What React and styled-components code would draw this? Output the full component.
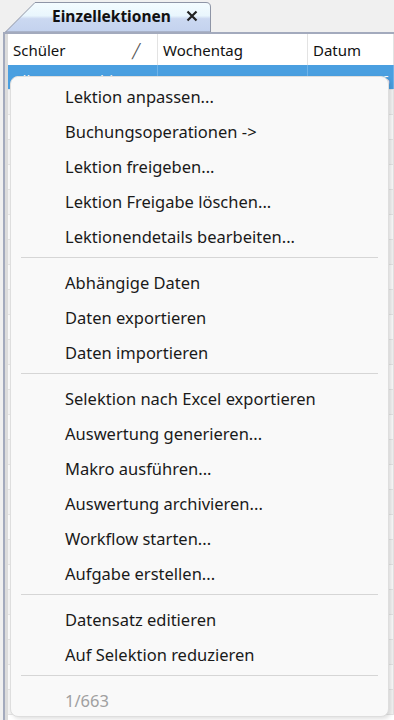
import React from 'react';
import styled, { createGlobalStyle } from 'styled-components';

const GlobalStyle = createGlobalStyle`
  html, body {
    margin: 0;
    padding: 0;
    background: #f0f0f0;
    font-family: "Noto Sans", "Open Sans", sans-serif;
    overflow: hidden;
  }
`;

const Page = styled.div`
  position: relative;
  width: 394px;
  height: 720px;
  overflow: hidden;
  background: #f0f0f0;
`;

const TabStrip = styled.div`
  height: 32px;
  display: flex;
  align-items: flex-end;
  padding-left: 5px;
`;

const Tab = styled.div`
  position: relative;
  width: 206px;
  height: 31px;
  display: flex;
  align-items: center;
  padding-left: 47px;
  padding-bottom: 1px;
  box-sizing: border-box;
`;

const TabShape = styled.svg`
  position: absolute;
  left: 0;
  top: 0;
  width: 206px;
  height: 31px;
`;

const TabTitle = styled.span`
  position: relative;
  font-weight: 700;
  font-size: 15.5px;
  color: #111;
`;

const CloseMark = styled.svg`
  position: relative;
  margin-left: 15px;
  width: 12px;
  height: 12px;
`;

const Panel = styled.div`
  margin-left: 3px;
  border-left: 2px solid #a3aabd;
  border-top: 2px solid #a3aabd;
  height: 700px;
  background: #fff;
`;

const Inner = styled.div`
  border-left: 3px solid #dcdcdc;
  height: 100%;
`;

const HeaderRow = styled.div`
  display: grid;
  grid-template-columns: 150px 150px 1fr;
  height: 31px;
  background: #fff;
`;

const HeaderCell = styled.div`
  position: relative;
  display: flex;
  align-items: center;
  padding-left: 5px;
  font-size: 15px;
  color: #111;
  border-right: 1px solid #e3e3e3;
`;

const SortMark = styled.span`
  position: absolute;
  left: 124px;
  top: 7px;
  font-size: 14px;
  color: #555;
`;

const Row = styled.div`
  display: grid;
  grid-template-columns: 150px 150px 1fr;
  height: 25px;
  background: ${({ $selected, $alt }) => ($selected ? '#4a9fe0' : $alt ? '#f3f3f3' : '#fafafa')};
  border-bottom: 1px solid #e4e4e4;
  box-sizing: border-box;
`;

const Cell = styled.div`
  display: flex;
  align-items: center;
  padding-left: 5px;
  padding-top: 6px;
  font-size: 15px;
  color: ${({ $selected }) => ($selected ? '#fff' : '#111')};
  border-right: 1px solid ${({ $selected }) => ($selected ? '#6fb3e8' : '#e3e3e3')};
  white-space: nowrap;
  overflow: hidden;
`;

const Menu = styled.div`
  position: absolute;
  left: 10px;
  top: 76px;
  width: 379px;
  height: 641px;
  box-sizing: border-box;
  background: #f9f9f9;
  border: 1px solid #dedede;
  border-radius: 8px;
  box-shadow: 2px 2px 4px rgba(0, 0, 0, 0.12);
  padding-top: 2px;
`;

const Item = styled.div`
  height: 35px;
  display: flex;
  align-items: center;
  padding-left: 54px;
  font-size: 16.5px;
  color: ${({ $disabled }) => ($disabled ? '#a0a0a0' : '#1a1a1a')};
`;

const Separator = styled.div`
  height: 1px;
  margin: 3px 10px 7px 10px;
  background: #d6d6d6;
`;

const groups = [
  [
    'Lektion anpassen...',
    'Buchungsoperationen ->',
    'Lektion freigeben...',
    'Lektion Freigabe löschen...',
    'Lektionendetails bearbeiten...',
  ],
  ['Abhängige Daten', 'Daten exportieren', 'Daten importieren'],
  [
    'Selektion nach Excel exportieren',
    'Auswertung generieren...',
    'Makro ausführen...',
    'Auswertung archivieren...',
    'Workflow starten...',
    'Aufgabe erstellen...',
  ],
  ['Datensatz editieren', 'Auf Selektion reduzieren'],
];

const rows = Array.from({ length: 26 });

function App() {
  return (
    <Page>
      <GlobalStyle />
      <TabStrip>
        <Tab>
          <TabShape viewBox="0 0 206 31">
            <defs>
              <linearGradient id="tabFill" x1="0" y1="0" x2="0" y2="1">
                <stop offset="0" stopColor="#f4fcff" />
                <stop offset="0.45" stopColor="#e9f6fd" />
                <stop offset="0.55" stopColor="#cbd8f1" />
                <stop offset="1" stopColor="#c3d2ee" />
              </linearGradient>
            </defs>
            <path
              d="M0.5 31 L30 1.5 L201 1.5 Q205.5 1.5 205.5 6 L205.5 31 Z"
              fill="url(#tabFill)"
              stroke="#8e95a6"
              strokeWidth="1"
            />
          </TabShape>
          <TabTitle>Einzellektionen</TabTitle>
          <CloseMark viewBox="0 0 12 12">
            <path d="M1.5 1.5 L10.5 10.5 M10.5 1.5 L1.5 10.5" stroke="#222" strokeWidth="2.2" />
          </CloseMark>
        </Tab>
      </TabStrip>
      <Panel>
        <Inner>
          <HeaderRow>
            <HeaderCell>
              Schüler
              <SortMark>╱</SortMark>
            </HeaderCell>
            <HeaderCell>Wochentag</HeaderCell>
            <HeaderCell>Datum</HeaderCell>
          </HeaderRow>
          {rows.map((_, i) => (
            <Row key={i} $selected={i === 0} $alt={i % 2 === 1}>
              <Cell $selected={i === 0}>{i === 0 ? 'Allemann Tobias' : ''}</Cell>
              <Cell $selected={i === 0}>{i === 0 ? 'Montag' : ''}</Cell>
              <Cell $selected={i === 0}>{i === 0 ? '23.02.2026' : ''}</Cell>
            </Row>
          ))}
        </Inner>
      </Panel>
      <Menu>
        {groups.map((g, gi) => (
          <React.Fragment key={gi}>
            {g.map(label => (
              <Item key={label}>{label}</Item>
            ))}
            <Separator />
          </React.Fragment>
        ))}
        <Item $disabled>1/663</Item>
      </Menu>
    </Page>
  );
}

export default App;
